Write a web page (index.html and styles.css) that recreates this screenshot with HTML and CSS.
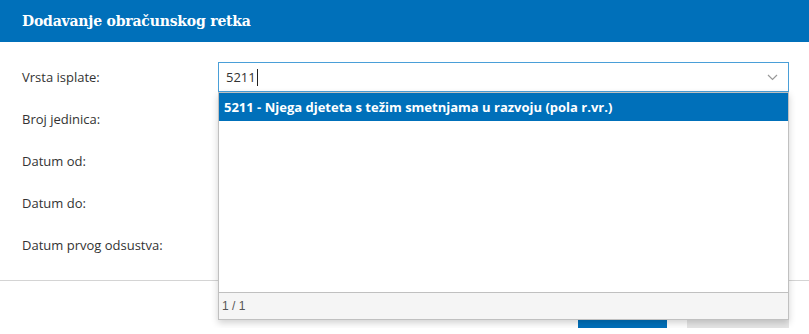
FILE: index.html
```html
<!DOCTYPE html>
<html lang="hr">
<head>
    <meta charset="UTF-8">
    <meta name="viewport" content="width=device-width, initial-scale=1.0">
    <title>Dodavanje obračunskog retka</title>
    <link rel="stylesheet" href="styles.css">
</head>
<body>
    <div class="modal">
        <div class="modal-header">
            <h2>Dodavanje obračunskog retka</h2>
        </div>

        <div class="modal-body">
            <div class="form-row">
                <label>Vrsta isplate:</label>
                <div class="field">
                    <div class="combo">
                        <span class="combo-value">5211</span><span class="caret"></span>
                        <svg class="chevron" width="11" height="7" viewBox="0 0 11 7">
                            <path d="M1 1 L5.5 5.5 L10 1" fill="none" stroke="#999" stroke-width="1.2"/>
                        </svg>
                    </div>
                    <div class="dropdown">
                        <ul class="dropdown-list">
                            <li class="selected">5211 - Njega djeteta s težim smetnjama u razvoju (pola r.vr.)</li>
                        </ul>
                        <div class="dropdown-footer">1 / 1</div>
                    </div>
                </div>
            </div>
            <div class="form-row">
                <label>Broj jedinica:</label>
                <div class="field"><input type="text"></div>
            </div>
            <div class="form-row">
                <label>Datum od:</label>
                <div class="field"><input type="text"></div>
            </div>
            <div class="form-row">
                <label>Datum do:</label>
                <div class="field"><input type="text"></div>
            </div>
            <div class="form-row">
                <label>Datum prvog odsustva:</label>
                <div class="field"><input type="text"></div>
            </div>
        </div>

        <div class="modal-footer">
            <button class="btn btn-primary">Spremi</button>
            <button class="btn btn-default">Odustani</button>
        </div>
    </div>
</body>
</html>
```
FILE: styles.css
```css
body {
    margin: 0;
    font-family: "Open Sans", Arial, sans-serif;
    font-size: 13px;
    color: #333;
    background: white;
}
.modal-header {
    background-color: #0070ba;
    height: 42px;
    padding: 0 22px;
    display: flex;
    align-items: center;
}
.modal-header h2 {
    margin: 0;
    color: white;
    font-family: "DejaVu Serif", serif;
    font-size: 14px;
    font-weight: bold;
    letter-spacing: -0.2px;
}
.modal-body {
    padding: 20px 20px 20px 22px;
    display: flex;
    flex-direction: column;
    gap: 12px;
    border-bottom: 1px solid #d4d4d4;
    height: 198px;
}
.form-row {
    display: flex;
    align-items: center;
    height: 30px;
}
.form-row label {
    width: 196px;
}
.field {
    flex: 1;
    position: relative;
}
.field input {
    visibility: hidden;
}
.combo {
    height: 28px;
    border: 1px solid #4a9fd8;
    display: flex;
    align-items: center;
    padding-left: 7px;
    position: relative;
}
.combo-value {
    color: #333;
}
.caret {
    display: inline-block;
    width: 1px;
    height: 17px;
    background: #222;
    margin-left: 1px;
}
.chevron {
    position: absolute;
    right: 10px;
    top: 11px;
}
.dropdown {
    position: absolute;
    left: 0;
    right: 0;
    top: 30px;
    height: 226px;
    background: white;
    border: 1px solid #c0c0c0;
    box-shadow: 0 3px 7px rgba(0, 0, 0, 0.18);
    display: flex;
    flex-direction: column;
    z-index: 5;
}
.dropdown-list {
    list-style: none;
    margin: 0;
    padding: 0;
    flex: 1;
}
.dropdown-list li {
    height: 28px;
    line-height: 28px;
    padding-left: 5px;
}
.dropdown-list li.selected {
    background: #0070ba;
    color: white;
    font-weight: bold;
}
.dropdown-footer {
    height: 26px;
    line-height: 26px;
    border-top: 1px solid #c0c0c0;
    background: #f5f5f5;
    padding-left: 3px;
    font-family: "Liberation Sans", Arial, sans-serif;
    font-size: 12px;
    color: #555;
}
.modal-footer {
    display: flex;
    justify-content: flex-end;
    gap: 20px;
    padding: 13px 20px 0;
}
.btn {
    height: 34px;
    border: none;
    font-family: "Open Sans", sans-serif;
    font-size: 13px;
}
.btn-primary {
    width: 89px;
    background: #0070ba;
    color: white;
}
.btn-default {
    width: 102px;
    background: #e6e6e6;
    color: #333;
}
```
